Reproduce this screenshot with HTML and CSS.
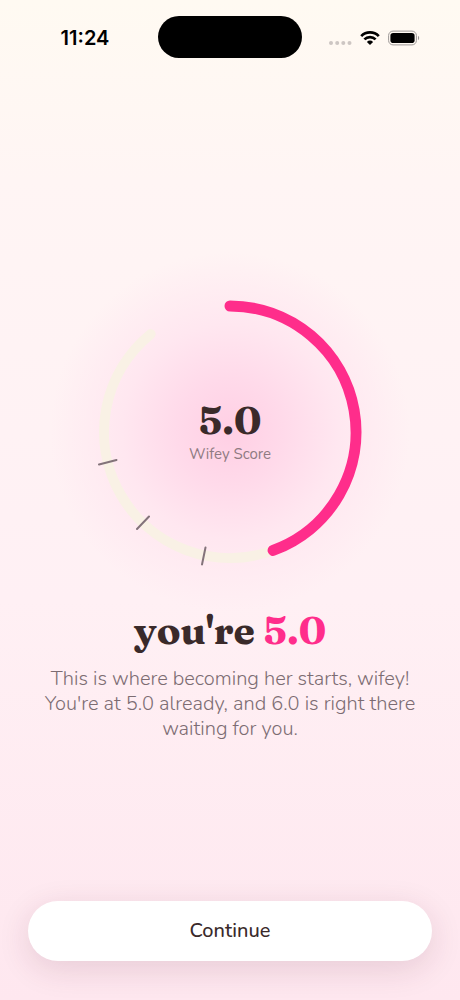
FILE: index.html
```html
<!DOCTYPE html>
<html lang="en">

<head>
    <meta charset="UTF-8">
    <meta name="viewport" content="width=device-width, initial-scale=1.0">
    <title>Wifey Score</title>
    <link rel="stylesheet" href="styles.css">
</head>

<body>
    <!-- status bar -->
    <header class="status">
        <div class="time">11:24</div>
        <div class="island"></div>
        <div class="icons">
            <svg width="23" height="16" viewBox="0 0 23 16" fill="#cdc6c3">
                <circle cx="2" cy="13" r="2" />
                <circle cx="8.2" cy="13" r="2" />
                <circle cx="14.3" cy="13" r="2" />
                <circle cx="20.5" cy="13" r="2" />
            </svg>
            <svg width="20" height="16" viewBox="0 0 20 16">
                <g fill="none" stroke="#000" stroke-width="2.7">
                    <path d="M1.2 6.1a12.4 12.4 0 0 1 17.6 0" />
                    <path d="M4.4 9.4a7.9 7.9 0 0 1 11.2 0" />
                </g>
                <path d="M10 15 6.9 11.9a4.4 4.4 0 0 1 6.2 0z" />
            </svg>
            <svg width="32" height="16" viewBox="0 0 32 16">
                <rect x=".6" y="1.1" width="27.8" height="13.8" rx="4.4" fill="none" stroke="#9c9896" />
                <rect x="2.4" y="2.9" width="24.2" height="10.2" rx="2.8" />
                <path d="M30 5.8a2.6 2.6 0 0 1 0 4.4z" fill="#9c9896" />
            </svg>
        </div>
    </header>

    <main class="content">
        <div class="gauge">
            <svg class="ring" viewBox="0 0 360 360" fill="none" stroke-linecap="round">
                <path class="track" d="M223.1 298.4A126 126 0 0 1 100.7 82.1" />
                <path class="value" d="M180 54A126 126 0 0 1 223.1 298.4" />
                <path class="tick" d="M49 212.5 66.5 208M87 277 99 264.5M152 312.5 155.5 295.5" />
            </svg>
            <div class="score">
                <strong>5.0</strong>
                <span>Wifey Score</span>
            </div>
        </div>
        <h1 class="title">you're <em>5.0</em></h1>
        <p class="text">This is where becoming her starts, wifey! You're at 5.0 already, and 6.0 is right there waiting for you.</p>
    </main>

    <footer class="bottom">
        <button type="button" class="btn">Continue</button>
    </footer>
</body>

</html>
```

FILE: styles.css
```css
* {
    margin: 0;
    padding: 0;
    box-sizing: border-box;
}

body {
    display: flex;
    flex-direction: column;
    min-height: 100vh;
    font-family: Nunito, Lato, sans-serif;
    color: #3a2a2a;
    background: linear-gradient(#fffaf2, #fff5f4 18%, #fff0f4 60%, #fee7ef);
}

.status {
    display: grid;
    grid-template-columns: 1fr 144px 1fr;
    align-items: center;
    padding: 16px 0;
}

.time {
    padding: 2px 0 0 12px;
    font: 600 20px/24px Inter, sans-serif;
    color: #000;
    text-align: center;
}

.island {
    height: 42px;
    border-radius: 21px;
    background: #000;
}

.icons {
    display: flex;
    justify-content: center;
    gap: 8px;
    padding: 2px 14px 0 0;
}

.content {
    flex: 1;
    display: flex;
    flex-direction: column;
    align-items: center;
    justify-content: center;
    padding: 38px 28px 0;
    text-align: center;
}

.gauge {
    display: grid;
    place-items: center;
    width: 100%;
    max-width: 360px;
    background: radial-gradient(closest-side, #ffcfe4, #ffdaea 30%, #ffe7f0 60%, rgba(255, 240, 244, 0));
}

.ring,
.score {
    grid-area: 1 / 1;
}

.ring {
    width: 100%;
}

.track {
    stroke: #f9f1e5;
    stroke-width: 10;
}

.value {
    stroke: #ff2d8b;
    stroke-width: 11;
}

.tick {
    stroke: #83737a;
    stroke-width: 2;
}

.score strong,
.title {
    font-family: Fraunces, "Liberation Serif", serif;
    font-size: 39px;
    font-weight: 700;
}

.score strong {
    display: block;
    line-height: 44px;
}

.score span {
    display: block;
    font-size: 15px;
    line-height: 24px;
    color: #8f7b82;
}

.title {
    line-height: 36px;
}

.title em {
    font-style: normal;
    color: #ff2d8b;
}

.text {
    margin-top: 18px;
    font-size: 20px;
    font-weight: 300;
    line-height: 25px;
    color: #7c6c72;
}

.bottom {
    padding: 20px 28px 39px;
}

.btn {
    width: 100%;
    height: 60px;
    padding-bottom: 2px;
    border: 0;
    border-radius: 30px;
    font-family: inherit;
    font-size: 20px;
    font-weight: 500;
    color: #3a2a2a;
    background: #fff;
    box-shadow: 0 8px 32px rgba(90, 30, 60, .14);
}
```
